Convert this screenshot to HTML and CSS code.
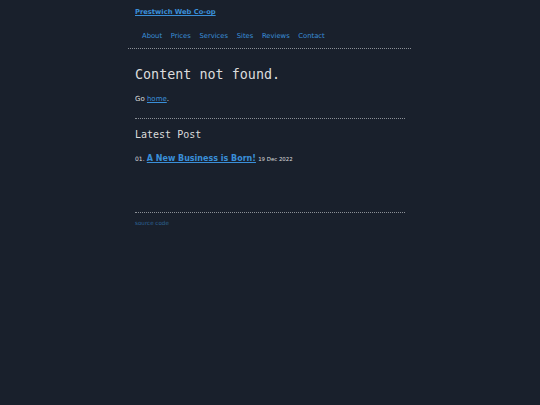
FILE: index.html
```html
<!DOCTYPE html>
<html lang="en">
<head>
    <meta charset="UTF-8">
    <meta name="viewport" content="width=device-width, initial-scale=1.0">
    <title>Content not found - Prestwich Web Co-op</title>
    <link rel="stylesheet" href="styles.css">
</head>
<body>
    <header class="site-header">
        <a class="site-title" href="#">Prestwich Web Co-op</a>
        <nav class="site-nav">
            <a href="#">About</a>
            <a href="#">Prices</a>
            <a href="#">Services</a>
            <a href="#">Sites</a>
            <a href="#">Reviews</a>
            <a href="#">Contact</a>
        </nav>
    </header>

    <main class="content">
        <h1>Content not found.</h1>
        <p class="note">Go <a href="#">home</a>.</p>
        <hr>
        <h2>Latest Post</h2>
        <p class="post">
            <span class="num">01.</span>
            <a class="post-title" href="#">A New Business is Born!</a>
            <span class="date">19 Dec 2022</span>
        </p>
    </main>

    <footer class="site-footer">
        <hr>
        <a href="#">source code</a>
    </footer>
</body>
</html>
```

FILE: styles.css
```css
body {
    margin: 0;
    background-color: #19202c;
    color: #dcdcdc;
    font-family: "DejaVu Sans", sans-serif;
    font-size: 7px;
}
a {
    color: #3a8fd9;
}
hr {
    border: none;
    border-top: 1px dotted #8a8f96;
    margin: 0;
}
.site-header {
    width: 283px;
    margin-left: 128px;
    padding-top: 8px;
    border-bottom: 1px dotted #8a8f96;
}
.site-title {
    display: block;
    margin-left: 7px;
    font-size: 6.75px;
    font-weight: bold;
    line-height: 9px;
}
.site-nav {
    display: flex;
    gap: 8.6px;
    padding: 15px 0 7px 14px;
    line-height: 9px;
    font-size: 6.8px;
}
.site-nav a {
    text-decoration: none;
}
.content, .site-footer {
    width: 270px;
    margin-left: 135px;
}
h1 {
    font-family: "DejaVu Sans Mono", monospace;
    font-weight: normal;
    font-size: 13.4px;
    line-height: 16px;
    margin: 18px 0 0;
}
.note {
    margin: 11px 0 14px;
    line-height: 10px;
}
h2 {
    font-family: "DejaVu Sans Mono", monospace;
    font-weight: normal;
    font-size: 10px;
    line-height: 12px;
    margin: 10px 0 0;
}
.post {
    margin: 12px 0 0;
    line-height: 12px;
}
.num {
    font-size: 6px;
}
.date {
    font-size: 5.4px;
}
.post-title {
    font-weight: bold;
    font-size: 8px;
}
.site-footer {
    margin-top: 47px;
}
.site-footer a {
    display: block;
    margin-top: 7px;
    color: #2d6496;
    font-size: 5.6px;
    text-decoration-thickness: 1px;
}
```
